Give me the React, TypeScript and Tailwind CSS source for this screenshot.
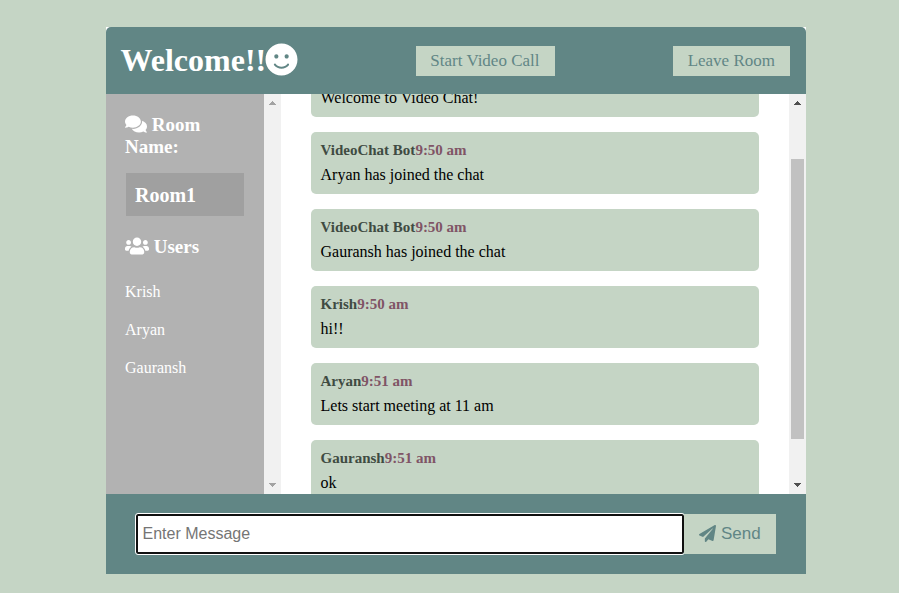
import { FaComments, FaPaperPlane, FaSmile, FaUsers } from "react-icons/fa";

type Message = { author?: string; time?: string; text: string };

const messages: Message[] = [
  { text: "Welcome to Video Chat!" },
  { author: "VideoChat Bot", time: "9:50 am", text: "Aryan has joined the chat" },
  { author: "VideoChat Bot", time: "9:50 am", text: "Gauransh has joined the chat" },
  { author: "Krish", time: "9:50 am", text: "hi!!" },
  { author: "Aryan", time: "9:51 am", text: "Lets start meeting at 11 am" },
  { author: "Gauransh", time: "9:51 am", text: "ok" },
];

const users = ["Krish", "Aryan", "Gauransh"];

function Arrow({ down = false, color }: { down?: boolean; color: string }) {
  return (
    <svg width="7" height="4" viewBox="0 0 7 4" shapeRendering="crispEdges" fill={color}>
      {down ? (
        <path d="M0 0h7v1H6v1H5v1H4v1H3V3H2V2H1V1H0z" />
      ) : (
        <path d="M0 4h7V3H6V2H5V1H4V0H3v1H2v1H1v1H0z" />
      )}
    </svg>
  );
}

function Scrollbar({ active = false }: { active?: boolean }) {
  const color = active ? "#505050" : "#a3a3a3";
  return (
    <div className="flex w-[17px] shrink-0 flex-col items-center bg-[#f1f1f1] pt-[7px] pb-[7px]">
      <Arrow color={color} />
      {active && <div className="mt-[54px] h-[280px] w-[13px] bg-[#c1c1c1]" />}
      <div className="mt-auto">
        <Arrow down color={color} />
      </div>
    </div>
  );
}

export default function App() {
  return (
    <div className="h-[593px] w-[899px] overflow-hidden bg-[#c5d5c5] pt-[27px] pl-[106px] font-['Liberation_Serif',serif] text-[16px] text-black">
      <div className="w-[700px] bg-white">
        <header className="flex h-[67px] items-center justify-between rounded-t-[5px] bg-[#618685] pr-4 pl-[14.5px]">
          <h1 className="flex items-center text-[32px] leading-[37px] font-bold text-white">
            Welcome!!
            <FaSmile className="-mt-[3px] -ml-px h-[33px] w-[33px]" />
          </h1>
          <button className="h-[30px] bg-[#c5d5c5] pr-[15.5px] pl-[14.5px] text-[17px] leading-[30px] text-[#618685]">
            Start Video Call
          </button>
          <button className="h-[30px] bg-[#c5d5c5] pr-[15px] pl-[15px] text-[17px] leading-[30px] text-[#618685]">
            Leave Room
          </button>
        </header>

        <main className="flex h-[400px]">
          <aside className="w-[158px] shrink-0 bg-[#b2b2b2] pt-5 pr-5 pl-[19px] text-white">
            <h3 className="text-[19px] leading-[22px] font-bold">
              <FaComments className="-mt-[5px] inline h-[20px] w-[22px]" /> Room Name:
            </h3>
            <h2 className="mt-[15px] mb-5 ml-px h-[43px] bg-[#a0a0a0] px-[9px] text-[20px] leading-[44px] font-bold">
              Room1
            </h2>
            <h3 className="text-[19px] leading-[22px] font-bold">
              <FaUsers className="-mt-[5px] inline h-5 w-6" /> Users
            </h3>
            <ul className="mt-[15px]">
              {users.map((user) => (
                <li key={user} className="py-[10px] leading-[18px]">
                  {user}
                </li>
              ))}
            </ul>
          </aside>
          <Scrollbar />
          <section className="h-[400px] flex-1 overflow-hidden px-[30px]">
            <div className="-mt-[39px] flex flex-col gap-[15px]">
              {messages.map((message, index) => (
                <article
                  key={index}
                  className="flex h-[62px] shrink-0 flex-col justify-between rounded-[5px] bg-[#c5d5c5] px-[9.5px] py-[10px]"
                >
                  <p className="h-[17px] text-[15px] leading-[17px] font-bold text-[#3f4b42]">
                    {message.author}
                    <span className="text-[#805466]">{message.time}</span>
                  </p>
                  <p className="h-[18px] leading-[18px]">{message.text}</p>
                </article>
              ))}
            </div>
          </section>
          <Scrollbar active />
        </main>

        <footer className="flex h-20 bg-[#618685] px-[30px] py-5">
          <input
            className="h-10 min-w-0 flex-1 rounded-[2px] border-2 border-[#101010] bg-white px-[4.5px] font-['Liberation_Sans',sans-serif] text-[16px] text-black outline outline-1 outline-white placeholder:text-[#757575]"
            placeholder="Enter Message"
          />
          <button className="flex h-10 w-[92px] items-center bg-[#c5d5c5] pl-[15px] font-['Liberation_Sans',sans-serif] text-[17px] text-[#618685]">
            <FaPaperPlane className="-mt-[2px] mr-[5px] h-[17px] w-[17px]" />
            Send
          </button>
        </footer>
      </div>
    </div>
  );
}
